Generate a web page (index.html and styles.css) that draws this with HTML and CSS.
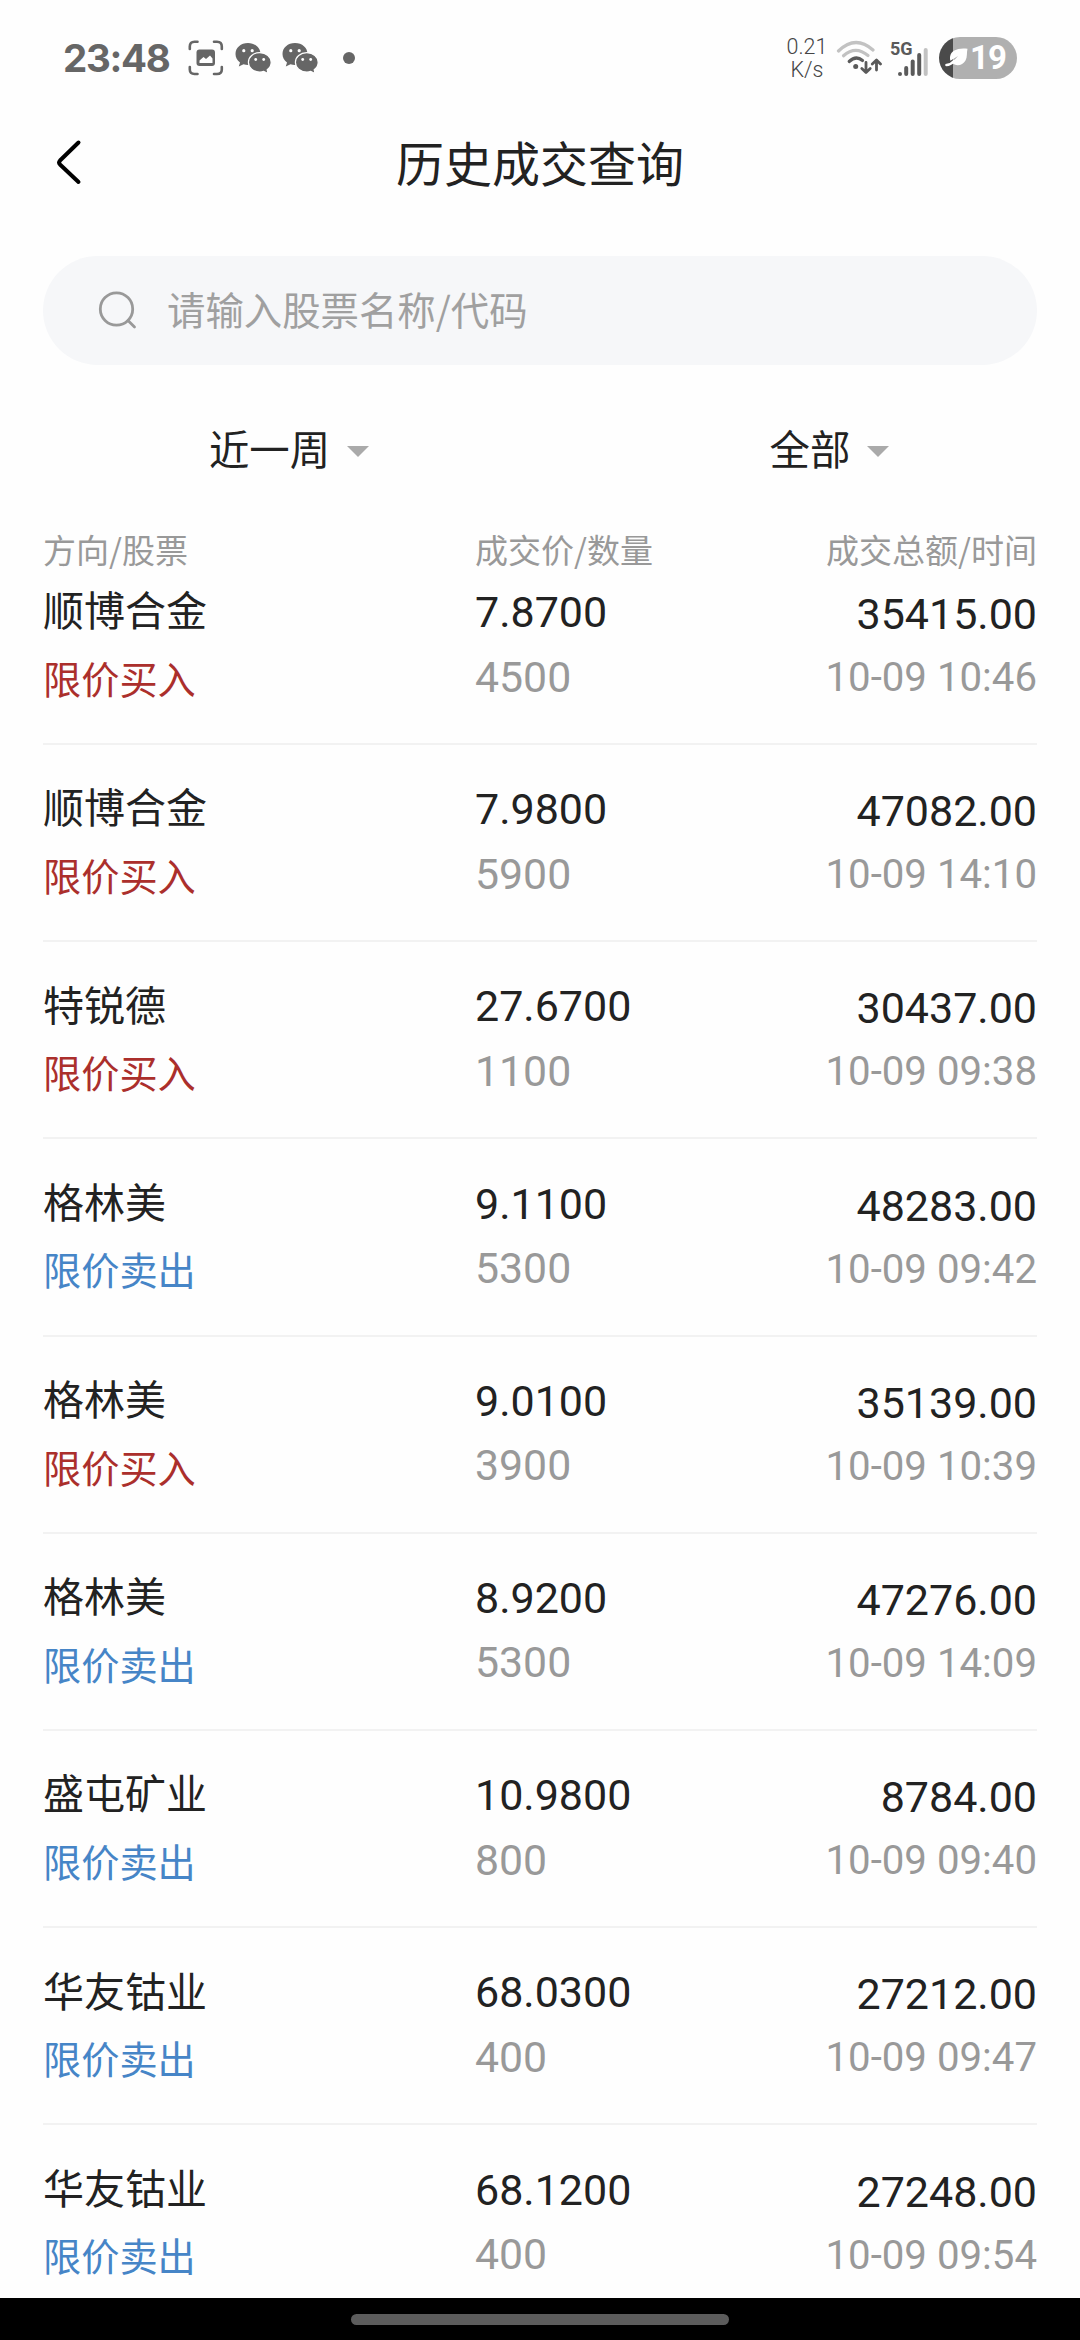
FILE: index.html
```
<!DOCTYPE html>
<html lang="zh-CN">
<head>
    <meta charset="UTF-8">
    <meta name="viewport" content="width=device-width, initial-scale=1.0">
    <title>历史成交查询</title>
    <link rel="stylesheet" href="styles.css">
</head>
<body>
    <div class="status-bar">
        <div class="status-left">
            <span class="clock">23:48</span>
            <svg class="icon-shot" width="36" height="36" viewBox="0 0 36 36">
                <g fill="none" stroke="#666" stroke-width="2.6" stroke-linecap="round">
                    <path d="M1.8 9V6.5Q1.8 1.8 6.5 1.8H9.5M26 1.8H29Q33.8 1.8 33.8 6.5V9M33.8 27V29.5Q33.8 34 29 34H26M9.5 34H6.5Q1.8 34 1.8 29.5V27"/>
                </g>
                <rect x="8.5" y="9.5" width="18.5" height="16.5" rx="3" fill="#666"/>
                <path d="M11.5 23V20.5L15.5 17L18 19L22 15.5L24.5 18.5V23Z" fill="#fff"/>
            </svg>
            <svg class="icon-wechat" width="37" height="32" viewBox="0 0 37 32">
                <path d="M13 1C5.8 1 .5 5.7 .5 12C.5 15.5 2.2 18.5 5 20.5L3.8 24.5L8.5 22.3C10 22.8 11.5 23 13 23C20.2 23 25.5 18.3 25.5 12S20.2 1 13 1Z" fill="#666"/>
                <circle cx="8.8" cy="8.7" r="1.6" fill="#fff"/>
                <circle cx="17.2" cy="8.7" r="1.6" fill="#fff"/>
                <path d="M24.8 10.7C18.3 10.7 13.4 14.9 13.4 20.3S18.3 30 24.8 30C26.2 30 27.5 29.8 28.7 29.4L33 31.5L32.2 27.8C34.7 26 36.2 23.3 36.2 20.3C36.2 14.9 31.3 10.7 24.8 10.7Z" fill="#666" stroke="#fff" stroke-width="1.2"/>
                <circle cx="20.7" cy="17.5" r="1.4" fill="#fff"/>
                <circle cx="28.7" cy="17.5" r="1.4" fill="#fff"/>
            </svg>
            <svg class="icon-wechat" width="37" height="32" viewBox="0 0 37 32">
                <path d="M13 1C5.8 1 .5 5.7 .5 12C.5 15.5 2.2 18.5 5 20.5L3.8 24.5L8.5 22.3C10 22.8 11.5 23 13 23C20.2 23 25.5 18.3 25.5 12S20.2 1 13 1Z" fill="#666"/>
                <circle cx="8.8" cy="8.7" r="1.6" fill="#fff"/>
                <circle cx="17.2" cy="8.7" r="1.6" fill="#fff"/>
                <path d="M24.8 10.7C18.3 10.7 13.4 14.9 13.4 20.3S18.3 30 24.8 30C26.2 30 27.5 29.8 28.7 29.4L33 31.5L32.2 27.8C34.7 26 36.2 23.3 36.2 20.3C36.2 14.9 31.3 10.7 24.8 10.7Z" fill="#666" stroke="#fff" stroke-width="1.2"/>
                <circle cx="20.7" cy="17.5" r="1.4" fill="#fff"/>
                <circle cx="28.7" cy="17.5" r="1.4" fill="#fff"/>
            </svg>
            <span class="more-dot"></span>
        </div>
        <div class="status-right">
            <div class="net-speed">
                <span>0.21</span>
                <span>K/s</span>
            </div>
            <svg class="icon-wifi" width="46" height="36" viewBox="0 0 46 36">
                <g fill="none" stroke-width="3.2" stroke-linecap="round">
                    <path d="M2.5 11Q19.5 -5.5 37 10" stroke="#c2c2c2"/>
                    <path d="M7.5 15.8Q19.5 5 32 15.5" stroke="#c2c2c2"/>
                    <path d="M13.2 21.5Q20 15 26.5 20.5" stroke="#5a5a5a"/>
                </g>
                <circle cx="19.7" cy="26.5" r="2.5" fill="#5a5a5a"/>
                <g fill="none" stroke="#5a5a5a" stroke-width="2.8" stroke-linecap="round" stroke-linejoin="round">
                    <path d="M30 22.5V32M25.8 28.5L30 32.5L34.2 28.5"/>
                    <path d="M40.5 30V20.5M36.3 24L40.5 20L44.5 24"/>
                </g>
            </svg>
            <div class="signal">
                <span class="signal-type">5G</span>
                <svg width="32" height="32" viewBox="0 0 32 32">
                    <g stroke="#5a5a5a" stroke-width="4" stroke-linecap="round">
                        <path d="M3 28V28"/>
                        <path d="M9.2 22V28"/>
                        <path d="M15.7 15.5V28"/>
                        <path d="M22.2 9V28"/>
                        <path d="M28.7 4V28" stroke="#c2c2c2"/>
                    </g>
                </svg>
            </div>
            <div class="battery">
                <svg width="24" height="20" viewBox="0 0 24 20">
                    <path d="M22.5 .8C13 -.5 6.5 2.5 5.2 8C4.8 10 5 11.5 5.4 12.8L13 8L7 14.8C10.5 18.5 17.5 18 20.5 12.5C22.5 9 21.5 5 22.5 .8Z" fill="#fff"/>
                    <path d="M1.5 17Q5.5 17 9 13" fill="none" stroke="#fff" stroke-width="2.6" stroke-linecap="round"/>
                </svg>
                <span>19</span>
            </div>
        </div>
    </div>

    <div class="nav-bar">
        <svg class="back" width="28" height="48" viewBox="0 0 28 48">
            <path d="M23.5 3.5L5 21.5Q3.2 23.5 5 25.5L23.5 43" fill="none" stroke="#000" stroke-width="4" stroke-linecap="round" stroke-linejoin="round"/>
        </svg>
        <h1>历史成交查询</h1>
    </div>

    <div class="search">
        <svg width="40" height="40" viewBox="0 0 40 40" fill="none" stroke="#999" stroke-width="2.8" stroke-linecap="round">
            <circle cx="18.5" cy="18" r="16.2"/>
            <path d="M30 29.5L36.5 36"/>
        </svg>
        <span>请输入股票名称/代码</span>
    </div>

    <div class="filters">
        <div class="filter filter-date">近一周<span class="caret"></span></div>
        <div class="filter filter-type">全部<span class="caret"></span></div>
    </div>

    <div class="table-head">
        <span>方向/股票</span>
        <span>成交价/数量</span>
        <span>成交总额/时间</span>
    </div>

    <div class="trade-list" id="trade-list"></div>

    <div class="gesture-bar">
        <span></span>
    </div>

    <script>
        const trades = [
            ['顺博合金', 'buy', '7.8700', '4500', '35415.00', '10-09 10:46'],
            ['顺博合金', 'buy', '7.9800', '5900', '47082.00', '10-09 14:10'],
            ['特锐德', 'buy', '27.6700', '1100', '30437.00', '10-09 09:38'],
            ['格林美', 'sell', '9.1100', '5300', '48283.00', '10-09 09:42'],
            ['格林美', 'buy', '9.0100', '3900', '35139.00', '10-09 10:39'],
            ['格林美', 'sell', '8.9200', '5300', '47276.00', '10-09 14:09'],
            ['盛屯矿业', 'sell', '10.9800', '800', '8784.00', '10-09 09:40'],
            ['华友钴业', 'sell', '68.0300', '400', '27212.00', '10-09 09:47'],
            ['华友钴业', 'sell', '68.1200', '400', '27248.00', '10-09 09:54']
        ];

        document.getElementById('trade-list').innerHTML = trades.map(([name, side, price, qty, total, time]) => `
            <div class="trade">
                <div class="col-stock">
                    <div class="name">${name}</div>
                    <div class="side ${side}">${side === 'buy' ? '限价买入' : '限价卖出'}</div>
                </div>
                <div class="col-price">
                    <div class="price">${price}</div>
                    <div class="qty">${qty}</div>
                </div>
                <div class="col-total">
                    <div class="total">${total}</div>
                    <div class="time">${time}</div>
                </div>
            </div>
        `).join('');
    </script>
</body>
</html>
```
FILE: styles.css
```
* {
    margin: 0;
    padding: 0;
    box-sizing: border-box;
}

body {
    width: 1080px;
    height: 2340px;
    display: flex;
    flex-direction: column;
    overflow: hidden;
    background: #fefefe;
    color: #222;
    font-family: "Noto Sans CJK SC", sans-serif;
}

svg {
    display: block;
    flex-shrink: 0;
}

/* Status bar */
.status-bar {
    height: 116px;
    flex-shrink: 0;
    display: flex;
    justify-content: space-between;
    padding: 0 63px 0 63px;
    color: #666;
}

.status-left, .status-right {
    display: flex;
    align-items: center;
    height: 116px;
}

.clock {
    width: 125px;
    font-family: Inter, sans-serif;
    font-size: 38.5px;
    font-weight: 700;
    line-height: 56px;
    letter-spacing: -1.3px;
}

.icon-wechat {
    margin-left: 10px;
}

.icon-shot + .icon-wechat {
    margin-left: 11px;
}

.more-dot {
    width: 12px;
    height: 12px;
    margin-left: 24px;
    border-radius: 50%;
    background: #666;
}

.net-speed {
    display: flex;
    flex-direction: column;
    align-items: center;
    width: 40px;
    font-family: Roboto, sans-serif;
    font-size: 21.5px;
    font-weight: 300;
    line-height: 23px;
    color: #444;
}

.icon-wifi {
    margin-left: 9px;
}

.signal {
    display: flex;
    flex-direction: column;
    margin-left: 8px;
    width: 40px;
    height: 36px;
}

.signal-type {
    height: 6px;
    font-family: Roboto, sans-serif;
    font-size: 18px;
    font-weight: 700;
    line-height: 18px;
    color: #5a5a5a;
}

.signal svg {
    margin-left: 7px;
}

.battery {
    display: flex;
    align-items: center;
    width: 78px;
    height: 42px;
    margin-left: 9px;
    padding-left: 6px;
    border-radius: 21px;
    background: linear-gradient(90deg, #4a4a4a 14px, #b0b0b0 14px);
}

.battery span {
    margin-left: 1px;
    font-family: Roboto, sans-serif;
    font-size: 33px;
    font-weight: 700;
    line-height: 42px;
    letter-spacing: -1px;
    color: #fff;
}

/* Title */
.nav-bar {
    height: 140px;
    flex-shrink: 0;
    display: grid;
    grid-template-columns: 100px 1fr 100px;
    padding: 0 43px;
}

.back {
    margin: 23px 0 0 12px;
}

.nav-bar h1 {
    font-size: 48px;
    font-weight: 400;
    line-height: 90px;
    text-align: center;
}

/* Search */
.search {
    height: 109px;
    flex-shrink: 0;
    display: flex;
    align-items: center;
    margin: 0 43px;
    padding-left: 55px;
    border-radius: 55px;
    background: #f6f7f9;
    color: #a0a0a0;
    font-size: 38.4px;
    line-height: 56px;
}

.search span {
    margin-left: 29px;
    padding-bottom: 5px;
}

/* Filters */
.filters {
    height: 165px;
    flex-shrink: 0;
    display: grid;
    grid-template-columns: 1fr 1fr;
}

.filter {
    display: flex;
    align-items: center;
    justify-content: center;
    font-size: 40.4px;
    line-height: 60px;
}

.filter-date {
    padding-left: 38px;
}

.filter-type {
    padding-left: 39px;
}

.caret {
    width: 0;
    height: 0;
    margin: 8px 0 0 17px;
    border: 11px solid transparent;
    border-bottom: 0;
    border-top-color: #aaa;
}

/* Table */
.table-head, .trade {
    display: grid;
    grid-template-columns: 432px 1fr 1fr;
    margin: 0 43px;
}

.table-head {
    height: 50px;
    flex-shrink: 0;
    color: #999;
    font-size: 33px;
    line-height: 39px;
}

.table-head span:last-child {
    text-align: right;
}

.trade-list {
    flex: 1;
    min-height: 0;
}

.trade {
    height: 197.2px;
    padding-top: 32.2px;
    border-bottom: 2px solid #f2f2f2;
}

.trade:first-child {
    height: 165px;
    padding-top: 0;
}

.name {
    margin-top: 4.3px;
    font-size: 41px;
    line-height: 48px;
}

.side {
    margin-top: 23.5px;
    font-size: 38.2px;
    line-height: 44px;
}

.buy {
    color: #ab2f2c;
}

.sell {
    color: #4685c7;
}

.col-price, .col-total {
    font-family: Roboto, sans-serif;
}

.col-total {
    text-align: right;
}

.price, .total {
    margin-top: 8px;
    font-size: 43px;
    line-height: 48px;
}

.total {
    margin-top: 10px;
}

.qty, .time {
    color: #999;
    line-height: 44px;
}

.qty {
    margin-top: 18.5px;
    font-size: 42.8px;
}

.time {
    margin-top: 18px;
    font-size: 40.2px;
}

/* System gesture area */
.gesture-bar {
    height: 42px;
    flex-shrink: 0;
    padding-top: 16px;
    background: #000;
}

.gesture-bar span {
    display: block;
    width: 378px;
    height: 11px;
    margin: 0 auto;
    border-radius: 6px;
    background: #5c5c5c;
}
```
